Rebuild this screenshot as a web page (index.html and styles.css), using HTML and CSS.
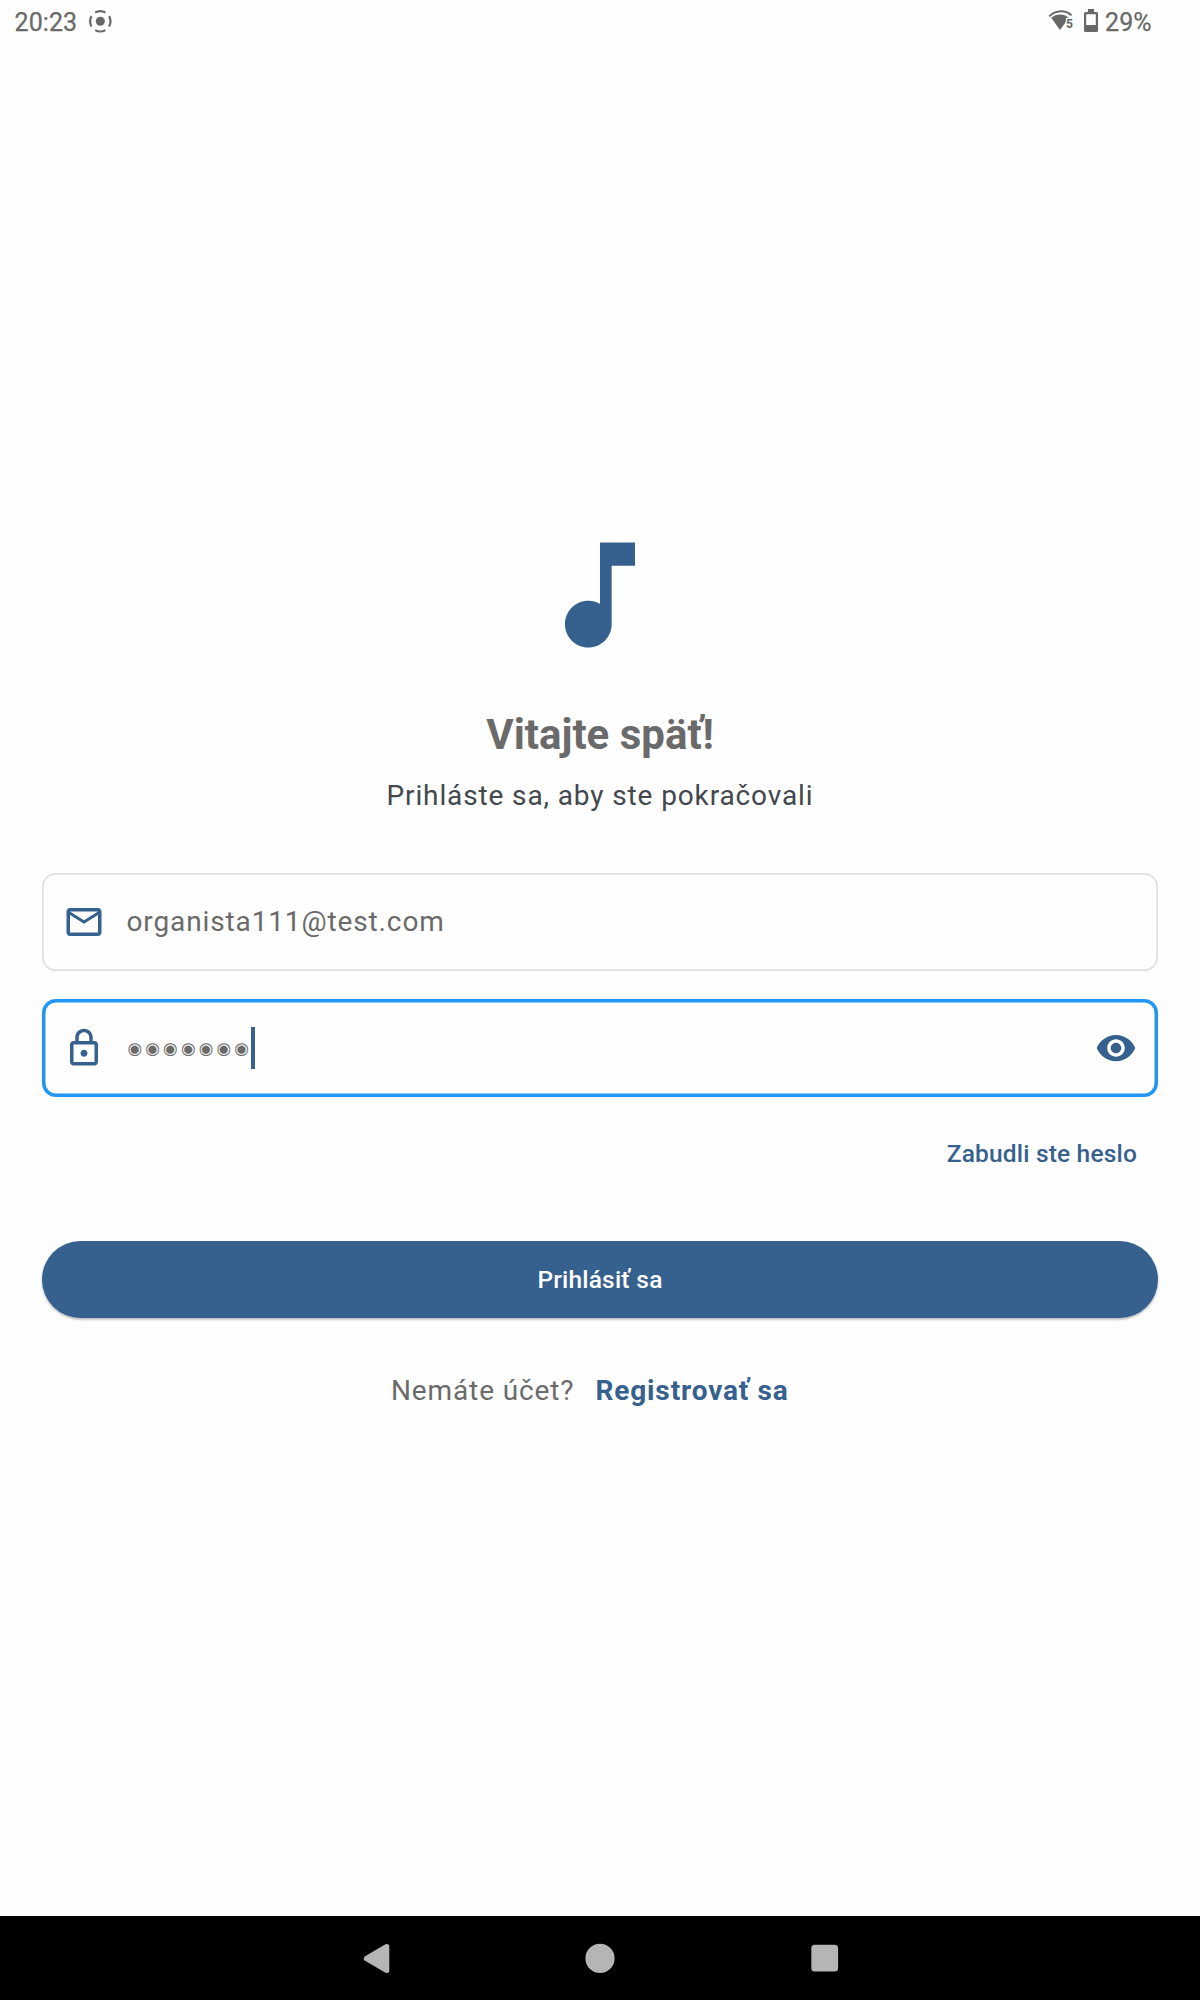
FILE: index.html
```html
<!DOCTYPE html>
<html lang="sk">
<head>
<meta charset="utf-8">
<title>Prihlásenie</title>
<link rel="stylesheet" href="styles.css">
</head>
<body>
<header class="status">
  <span class="clock">20:23</span>
  <svg class="cast" width="24" height="24" viewBox="0 0 24 24"><circle cx="12.300" cy="12.300" r="4.500" fill="#686868"/><circle cx="12.300" cy="12.300" r="10.200" fill="none" stroke="#686868" stroke-width="2.200" pathLength="80" stroke-dasharray="13.500 6.500" stroke-dashoffset="6.750"/></svg>
  <span class="spacer"></span>
  <svg class="wifi" width="26" height="22" viewBox="0 0 26 22"><path d="M1.300 7.400C7.500 .6 18 .6 23.600 6.400" fill="none" stroke="#686868" stroke-width="2"/><path d="M3.200 8.800C8 4.300 16 4.300 21 8.800L12 21Z" fill="#686868"/><text class="wifi-gen" x="18" y="18.800">5</text></svg>
  <svg class="battery" width="14" height="24" viewBox="0 0 14 24"><path fill="#686868" fill-rule="evenodd" d="M4 0h6v3h2.500q1.500 0 1.500 1.500v17q0 1.500-1.500 1.500h-11Q0 23 0 21.500v-17Q0 3 1.500 3H4zM2.200 5.200v10.800h9.600V5.200z"/></svg>
  <span class="level">29%</span>
</header>
<main class="login">
  <svg class="logo" width="140" height="140" viewBox="0 0 24 24"><path fill="#36618e" d="M12 3v10.550c-.59-.34-1.270-.55-2-.55-2.210 0-4 1.790-4 4s1.790 4 4 4 4-1.790 4-4V7h4V3h-6z"/></svg>
  <h1 class="title">Vitajte späť!</h1>
  <p class="subtitle">Prihláste sa, aby ste pokračovali</p>
  <div class="field">
    <svg class="icon" viewBox="0 0 24 24"><path d="M22 6c0-1.100-.9-2-2-2H4c-1.100 0-2 .9-2 2v12c0 1.100.9 2 2 2h16c1.100 0 2-.9 2-2V6zm-2 0l-8 5-8-5h16zm0 12H4V8l8 5 8-5v10z"/></svg>
    <span class="value">organista111@test.com</span>
  </div>
  <div class="field focused">
    <svg class="icon" viewBox="0 0 24 24"><path d="M18 8h-1V6c0-2.760-2.240-5-5-5S7 3.240 7 6v2H6c-1.100 0-2 .9-2 2v10c0 1.100.9 2 2 2h12c1.100 0 2-.9 2-2V10c0-1.100-.9-2-2-2zM9 6c0-1.660 1.340-3 3-3s3 1.340 3 3v2H9V6zm9 14H6V10h12v10zm-6-3c1.100 0 2-.9 2-2s-.9-2-2-2-2 .9-2 2 .9 2 2 2z"/></svg>
    <span class="dots">◉◉◉◉◉◉◉</span><span class="caret"></span>
    <svg class="icon eye" viewBox="0 0 24 24"><path d="M12 4.500C7 4.500 2.730 7.610 1 12c1.730 4.390 6 7.500 11 7.500s9.270-3.110 11-7.500c-1.730-4.390-6-7.500-11-7.500zM12 17c-2.760 0-5-2.240-5-5s2.240-5 5-5 5 2.240 5 5-2.240 5-5 5zm0-8c-1.660 0-3 1.340-3 3s1.340 3 3 3 3-1.340 3-3-1.340-3-3-3z"/></svg>
  </div>
  <a class="forgot">Zabudli ste heslo</a>
  <div class="submit">Prihlásiť sa</div>
  <div class="register"><span>Nemáte účet?</span><a class="register-link">Registrovať sa</a></div>
</main>
<nav class="navbar">
  <svg width="28" height="30" viewBox="0 0 28 30"><path d="M4.300 15.500 24.800 3.500V27.500Z" fill="#b5b5b5" stroke="#b5b5b5" stroke-width="5" stroke-linejoin="round"/></svg>
  <svg width="30" height="30" viewBox="0 0 30 30"><circle cx="15" cy="15.400" r="14.600" fill="#b5b5b5"/></svg>
  <svg width="28" height="28" viewBox="0 0 28 28"><rect x=".3" y=".8" width="26.800" height="26.800" rx="3.500" fill="#b5b5b5"/></svg>
</nav>
</body>
</html>
```
FILE: styles.css
```css
* { box-sizing: border-box; }
body {
  margin: 0;
  width: 1200px;
  height: 2000px;
  display: flex;
  flex-direction: column;
  background: #fefefe;
  color: #6a6a6a;
  font-family: Roboto, "Liberation Sans", sans-serif;
  overflow: hidden;
}
.status {
  height: 42px;
  flex: none;
  display: flex;
  align-items: flex-start;
  padding: 0 48.5px 0 14.5px;
}
.clock, .level { font-size: 25px; line-height: 45px; -webkit-text-stroke: .25px #6a6a6a; }
.clock { letter-spacing: .1px; }
.cast { margin: 9px 0 0 11px; overflow: visible; }
.spacer { flex: 1; }
.wifi { margin: 9px 10px 0 0; overflow: visible; }
.wifi-gen {
  font: 700 12px Roboto, sans-serif;
  fill: #686868;
  stroke: #fefefe;
  stroke-width: 2.5px;
  paint-order: stroke;
}
.battery { margin: 9px 7px 0 0; }
.login {
  flex: 1;
  display: flex;
  flex-direction: column;
  padding: 483px 42px 0;
}
.logo { align-self: center; }
.title {
  margin: 42px 0 0;
  font-size: 42px;
  line-height: 56px;
  font-weight: 700;
  text-align: center;
}
.subtitle {
  margin: 12px 0 56px;
  font-size: 28px;
  line-height: 42px;
  letter-spacing: .875px;
  text-align: center;
  color: #43474e;
}
.field {
  height: 98px;
  display: flex;
  align-items: center;
  margin-bottom: 28px;
  padding-left: 21px;
  border-radius: 14px;
  box-shadow: inset 0 0 0 1.75px #e0e0e0;
}
.field.focused { box-shadow: inset 0 0 0 3.5px #2196f3; }
.icon { width: 42px; height: 42px; fill: #36618e; }
.value {
  margin-left: 21.5px;
  font-size: 28px;
  line-height: 42px;
  letter-spacing: .875px;
}
.dots {
  margin: 1px -1px 0 22.5px;
  font: 16.5px/42px "DejaVu Sans", sans-serif;
  letter-spacing: 3.4px;
}
.caret { width: 3.5px; height: 42px; background: #36618e; }
.eye { margin-left: auto; margin-right: 21px; }
.forgot {
  align-self: flex-end;
  margin: 8px 21px 65.7px;
  font-size: 24.5px;
  line-height: 42px;
  font-weight: 500;
  letter-spacing: .175px;
  color: #36618e;
}
.submit {
  height: 77px;
  border-radius: 38.5px;
  background: #36618e;
  box-shadow: 0 1.5px 2.5px rgba(0, 0, 0, .3);
  color: #fff;
  font-size: 24.5px;
  line-height: 77px;
  font-weight: 500;
  letter-spacing: .175px;
  text-align: center;
}
.register {
  display: flex;
  margin: 52.3px 0 0 349px;
  gap: 21px;
  font-size: 28px;
  line-height: 42px;
  letter-spacing: .875px;
}
.register-link { font-weight: 700; color: #36618e; }
.navbar {
  height: 84px;
  flex: none;
  display: flex;
  align-items: center;
  justify-content: center;
  gap: 195.5px;
  background: #000;
}
```
